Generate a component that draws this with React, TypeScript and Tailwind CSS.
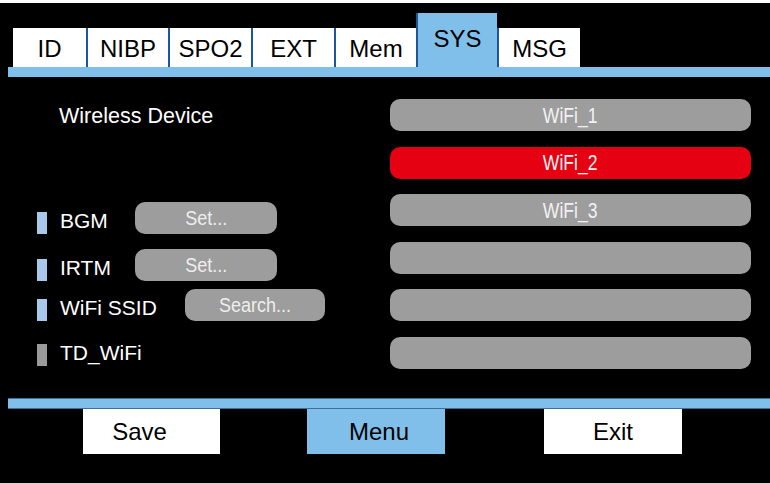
import React from 'react';

const tabs = [
  { label: 'ID', width: 'w-[73px]', first: true },
  { label: 'NIBP', width: 'w-[82px]' },
  { label: 'SPO2', width: 'w-[83px]' },
  { label: 'EXT', width: 'w-[83px]' },
  { label: 'Mem', width: 'w-[82px]' },
  { label: 'SYS', width: 'w-[81px]', active: true },
  { label: 'MSG', width: 'w-[83px]' },
];

const wifiList = ['WiFi_1', 'WiFi_2', 'WiFi_3', '', '', ''];
const selected = 1;

const DeviceRow = ({
  label,
  labelWidth,
  button,
  on = true,
}: {
  label: string;
  labelWidth: string;
  button?: string;
  on?: boolean;
}) => (
  <div className="flex items-start h-[32px]">
    <div className={`w-[10px] h-[22px] mt-[10px] ${on ? 'bg-[#a8c8ec]' : 'bg-[#9a9a9a]'}`} />
    <div className={`ml-[13px] mt-[8px] text-[21px] leading-[22px] text-white ${labelWidth}`}>{label}</div>
    {button && (
      <div
        className={`h-[32px] rounded-[10px] bg-[#9d9d9d] flex items-center justify-center text-[20px] text-[#eeeeee] ${
          button === 'Search...' ? 'w-[140px]' : 'w-[142px]'
        }`}
      >
        {/* the panel font is a narrow face, squeeze it */}
        <span className="inline-block scale-x-[0.9]">{button}</span>
      </div>
    )}
  </div>
);

export default function App() {
  return (
    <div className="w-[770px] h-[483px] bg-white pt-[3px] font-['Liberation_Sans',Arial,sans-serif]">
      <div className="h-[480px] bg-black flex flex-col">
        {/* tab strip */}
        <div className="flex items-end pl-[13px] pt-[10px] h-[64px]">
          {tabs.map((t) => (
            <div
              key={t.label}
              className={`${t.width} flex justify-center text-[24px] leading-[28px] text-black ${
                t.first ? '' : 'border-l-2 border-[#1d55a0]'
              } ${t.active ? 'h-[54px] pt-[12px] bg-[#80bfe9]' : 'h-[39px] pt-[7px] bg-white'}`}
            >
              {t.label}
            </div>
          ))}
        </div>
        <div className="ml-[8px] h-[10px] bg-[#80bfe9]" />

        {/* body */}
        <div className="h-[321px] flex">
          <div className="w-[390px] pl-[37px] flex flex-col">
            <div className="mt-[28px] ml-[22px] text-[21.5px] leading-[22px] text-white">Wireless Device</div>
            <div className="mt-[75px]">
              <DeviceRow label="BGM" labelWidth="w-[75px]" button="Set..." />
            </div>
            <div className="mt-[15px]">
              <DeviceRow label="IRTM" labelWidth="w-[75px]" button="Set..." />
            </div>
            <div className="mt-[8px]">
              <DeviceRow label="WiFi SSID" labelWidth="w-[125px]" button="Search..." />
            </div>
            <div className="mt-[13px]">
              <DeviceRow label="TD_WiFi" labelWidth="w-[125px]" on={false} />
            </div>
          </div>

          <div className="w-[361px] mt-[22px] flex flex-col gap-[15.6px]">
            {wifiList.map((name, i) => (
              <div
                key={i}
                className={`h-[32px] rounded-[10px] flex items-center justify-center text-[22px] text-[#f2f2f2] ${
                  i === selected ? 'bg-[#e50012]' : 'bg-[#9d9d9d]'
                }`}
              >
                <span className="inline-block scale-x-[0.8]">{name}</span>
              </div>
            ))}
          </div>
        </div>

        {/* bottom bar */}
        <div className="ml-[8px] h-[11px] bg-[#80bfe9] border-y border-[#3e6f99]" />
        <div className="flex h-[45px]">
          <div className="ml-[83px] w-[137px] pr-[24px] bg-white flex items-center justify-center text-[24px] text-black">Save</div>
          <div className="ml-[87px] w-[138px] pl-[6px] bg-[#80bfe9] flex items-center justify-center text-[24px] text-black">Menu</div>
          <div className="ml-[99px] w-[138px] bg-white flex items-center justify-center text-[24px] text-black">Exit</div>
        </div>
      </div>
    </div>
  );
}
